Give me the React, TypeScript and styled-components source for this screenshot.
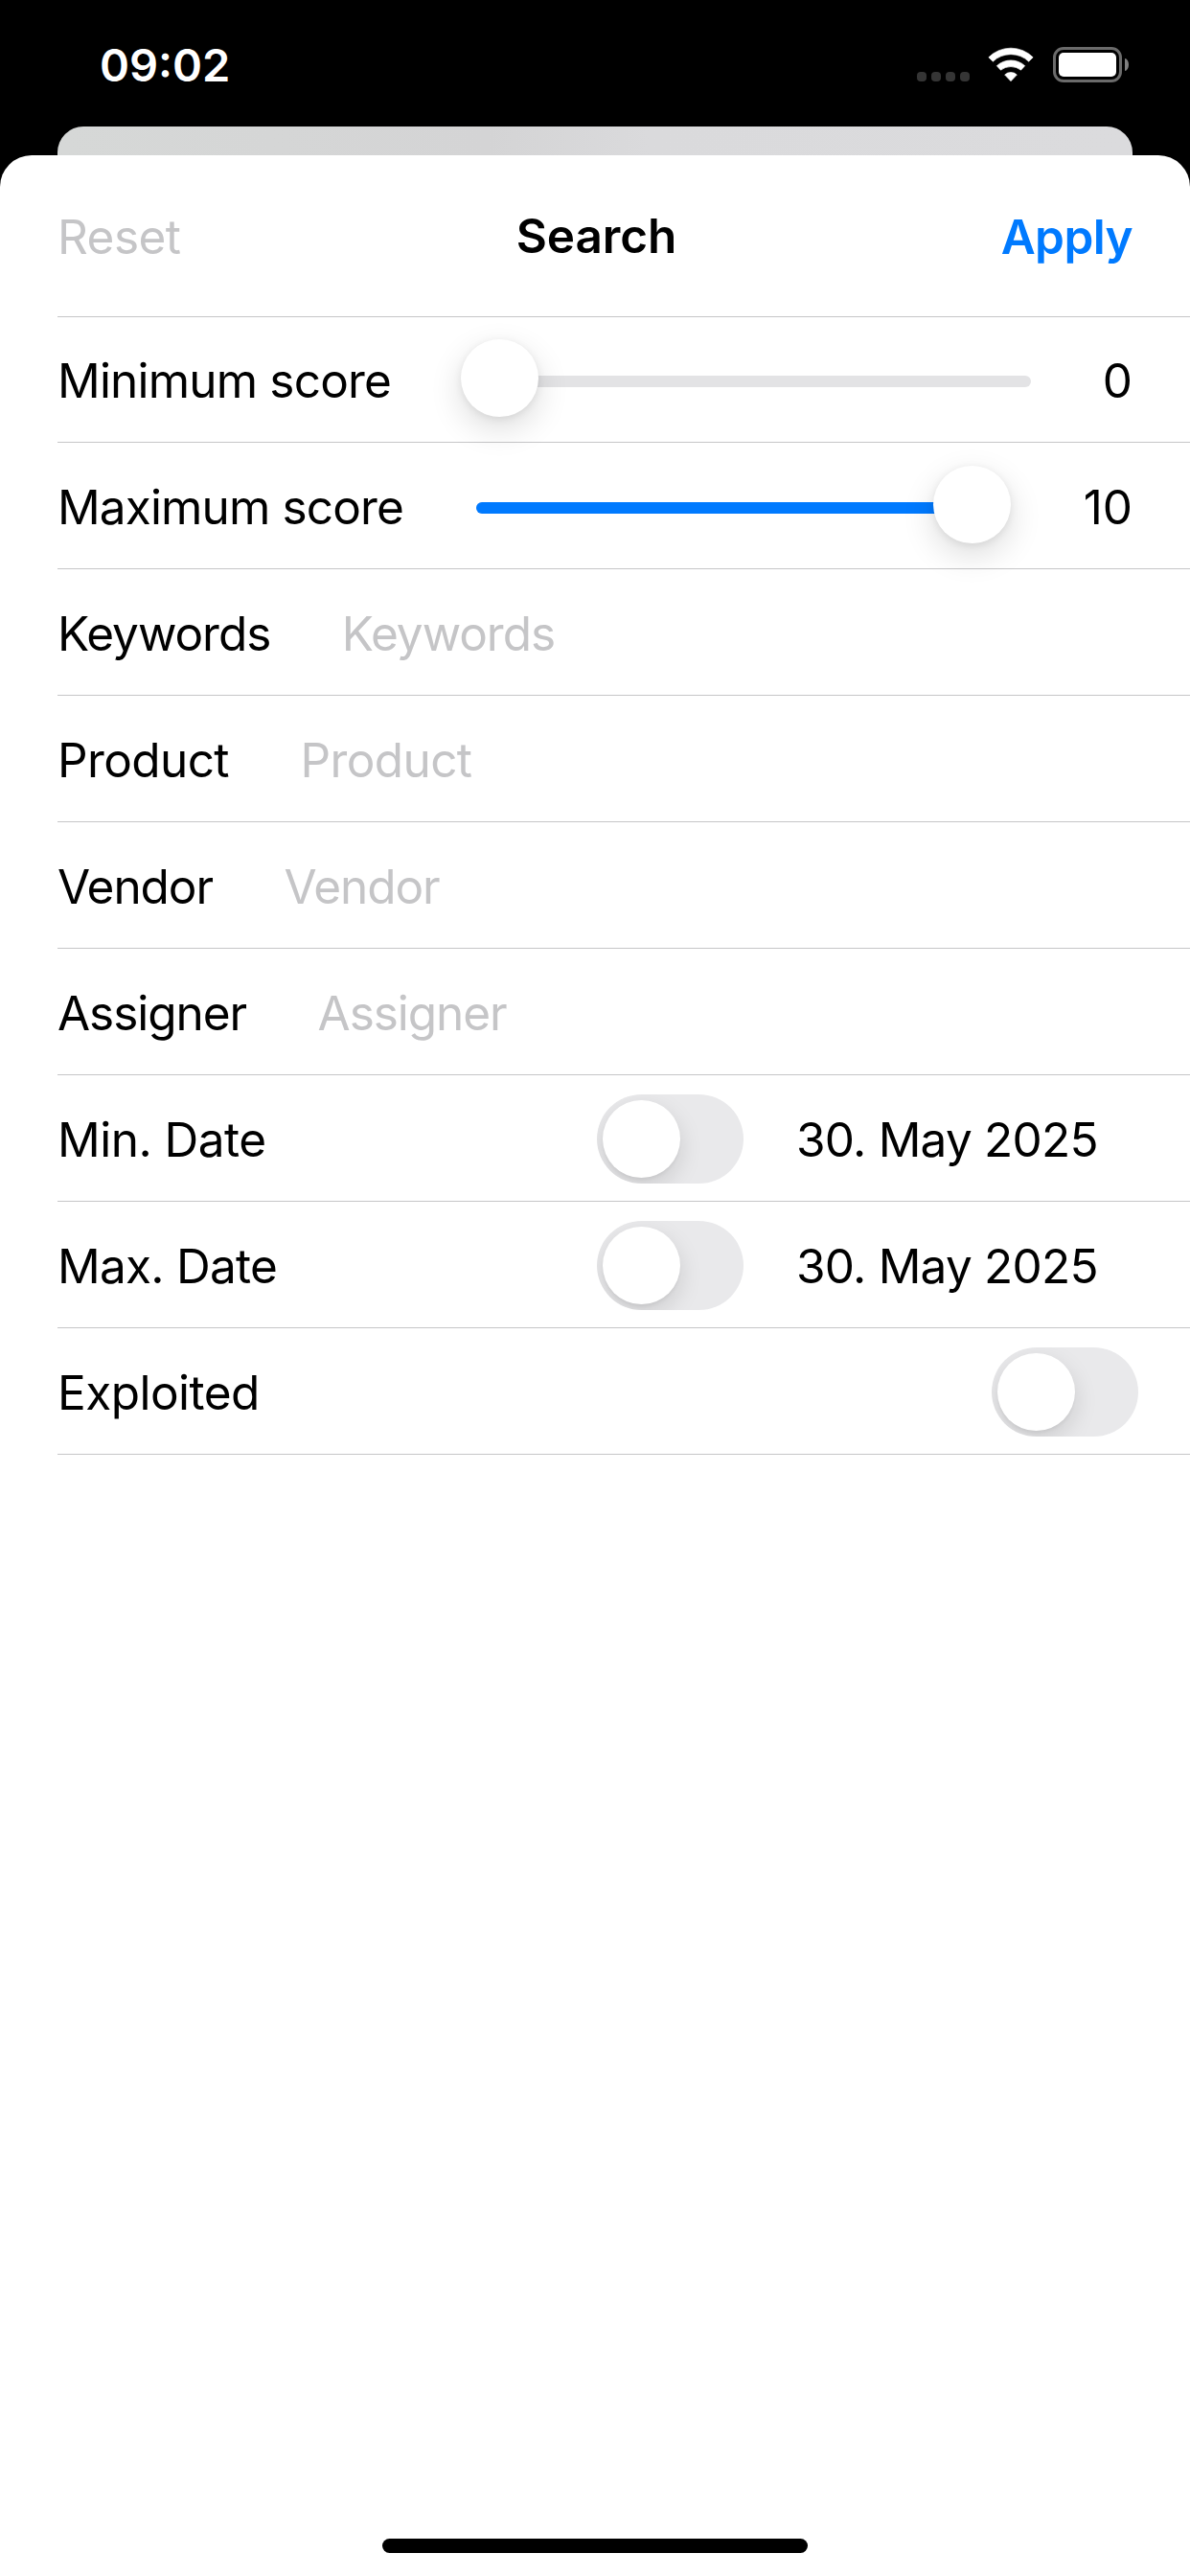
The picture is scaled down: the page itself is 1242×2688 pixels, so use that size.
import styled, { createGlobalStyle } from "styled-components";

const GlobalStyle = createGlobalStyle`
  * {
    box-sizing: border-box;
  }

  body {
    margin: 0;
    background: #000000;
    font-family: "Inter", "Liberation Sans", sans-serif;
  }
`;

const Screen = styled.div`
  display: flex;
  flex-direction: column;
  width: 1242px;
  height: 2688px;
  overflow: hidden;
  background: #000000;
`;

const StatusBar = styled.div`
  flex: none;
  display: flex;
  justify-content: space-between;
  height: 132px;
  padding: 0 64px 0 104px;
`;

const Time = styled.span`
  margin-top: 40px;
  font-size: 47px;
  line-height: 56px;
  font-weight: 570;
  color: #ffffff;
`;

const StatusIcons = styled.div`
  display: flex;
  align-items: flex-end;
  height: 86px;
`;

const SignalDots = styled.div`
  display: flex;
  gap: 5px;
  margin: 0 19px 1px 0;
`;

const SignalDot = styled.span`
  width: 10px;
  height: 10px;
  border-radius: 4px;
  background: #353535;
`;

const WifiIcon = styled.svg`
  width: 48px;
  height: 37px;
  margin-right: 20px;
`;

const Battery = styled.div`
  width: 72px;
  height: 37px;
  padding: 3px;
  border: 3px solid #6b6b6b;
  border-radius: 11px;
`;

const BatteryLevel = styled.div`
  height: 25px;
  border-radius: 5px;
  background: #ffffff;
`;

const BatteryCap = styled.div`
  width: 4px;
  height: 13px;
  margin: 0 0 12px 3px;
  border-radius: 0 4px 4px 0 / 0 6.5px 6.5px 0;
  background: #808080;
`;

const BackCard = styled.div`
  flex: none;
  height: 30px;
  margin: 0 60px;
  border-radius: 27px 27px 0 0;
  background: linear-gradient(90deg, #d6d8d7, #d4d4d5 40%, #dadadc 55%, #dbdbdd);
`;

const Sheet = styled.div`
  flex: 1;
  display: flex;
  flex-direction: column;
  border-radius: 33px 33px 0 0;
  background: #ffffff;
`;

const Header = styled.div`
  display: grid;
  grid-template-columns: 1fr auto 1fr;
  align-items: center;
  height: 168px;
  padding: 2px 60px 0;
`;

const ResetButton = styled.span`
  justify-self: start;
  font-size: 49.5px;
  letter-spacing: -0.54px;
  color: #c5c5c7;
`;

const Title = styled.span`
  padding: 0 0 2px 3px;
  font-size: 49.5px;
  font-weight: 570;
  letter-spacing: -0.1px;
`;

const ApplyButton = styled.span`
  justify-self: end;
  font-size: 49.5px;
  font-weight: 570;
  letter-spacing: -0.6px;
  color: #007aff;
`;

const Divider = styled.div`
  height: 1px;
  margin-left: 60px;
  background: #c6c6c8;
`;

const Form = styled.div`
  margin-left: 60px;
`;

const Row = styled.div`
  display: flex;
  align-items: center;
  height: 132px;
  padding-top: 1px;
  border-bottom: 1px solid #c6c6c8;
  font-size: 49.5px;
  color: #000000;

  &:first-child {
    height: 131px;
    padding-top: 0;
  }
`;

const Label = styled.span<{ $tracking: number; $width?: number }>`
  flex: none;
  width: ${({ $width }) => ($width ? `${$width}px` : "auto")};
  padding-top: 2px;
  letter-spacing: ${({ $tracking }) => $tracking}px;
  white-space: nowrap;
`;

const Placeholder = styled(Label)`
  margin-left: 74.5px;
  color: #c5c5c7;
`;

const SliderBox = styled.div<{ $width: number }>`
  position: relative;
  flex: none;
  display: flex;
  align-items: center;
  width: ${({ $width }) => $width}px;
  height: 81px;
  margin-top: 4px;
`;

const SliderTrack = styled.div`
  width: 100%;
  height: 12px;
  border-radius: 6px;
  background: #e3e3e5;
  overflow: hidden;
`;

const SliderFill = styled.div`
  height: 100%;
  background: #007aff;
`;

const SliderThumb = styled.div`
  position: absolute;
  top: -4px;
  width: 81px;
  height: 81px;
  border-radius: 50%;
  background: #ffffff;
  box-shadow: 0 12px 34px rgba(0, 0, 0, 0.14), 0 2px 8px rgba(0, 0, 0, 0.08);
`;

const ScoreValue = styled.span`
  flex: 1;
  padding: 2px 60px 0 0;
  text-align: right;
`;

const Toggle = styled.div`
  flex: none;
  width: 153px;
  height: 93px;
  margin-top: 1px;
  padding: 6px;
  border-radius: 47px;
  background: #e9e9eb;
  overflow: hidden;
`;

const ToggleKnob = styled.div`
  width: 81px;
  height: 81px;
  border-radius: 50%;
  background: #ffffff;
  box-shadow: 0 9px 24px rgba(0, 0, 0, 0.13), 0 3px 3px rgba(0, 0, 0, 0.04);
`;

const DateValue = styled.span`
  margin-left: 55px;
  padding-top: 2px;
  letter-spacing: -0.77px;
`;

const Spacer = styled.div`
  flex: 1;
`;

const EndInset = styled.div`
  flex: none;
  width: 54px;
`;

const HomeIndicator = styled.div`
  width: 444px;
  height: 15px;
  margin: auto auto 24px;
  border-radius: 8px;
  background: #000000;
`;

const CONTROL_OFFSET = 437;
const TOGGLE_OFFSET = 563;
const THUMB_SIZE = 81;
const THUMB_OVERHANG = 16;
const MAX_SCORE = 10;

interface RowProps {
  label: string;
  tracking: number;
}

interface ScoreRowProps extends RowProps {
  score: number;
  sliderWidth: number;
}

const ScoreRow = ({ label, tracking, score, sliderWidth }: ScoreRowProps) => {
  const travel = sliderWidth + THUMB_OVERHANG * 2 - THUMB_SIZE;
  const thumbLeft = (score / MAX_SCORE) * travel - THUMB_OVERHANG;

  return (
    <Row>
      <Label $tracking={tracking} $width={CONTROL_OFFSET}>{label}</Label>
      <SliderBox $width={sliderWidth}>
        <SliderTrack>
          <SliderFill style={{ width: thumbLeft + THUMB_SIZE / 2 }} />
        </SliderTrack>
        <SliderThumb style={{ left: thumbLeft }} />
      </SliderBox>
      <ScoreValue>{score}</ScoreValue>
    </Row>
  );
};

const TextRow = ({ label, tracking }: RowProps) => (
  <Row>
    <Label $tracking={tracking}>{label}</Label>
    <Placeholder $tracking={tracking}>{label}</Placeholder>
  </Row>
);

const Switch = () => (
  <Toggle>
    <ToggleKnob />
  </Toggle>
);

const DateRow = ({ label, tracking, date }: RowProps & { date: string }) => (
  <Row>
    <Label $tracking={tracking} $width={TOGGLE_OFFSET}>{label}</Label>
    <Switch />
    <DateValue>{date}</DateValue>
  </Row>
);

const Wifi = () => (
  <WifiIcon viewBox="0 0 144 111" fill="#fff" stroke="#fff" strokeWidth="2" strokeLinejoin="round">
    <path d="M2.5 32.5A98 98 0 0 1 141.5 32.5L128 45.5A81 81 0 0 0 16 45.5Z" />
    <path d="M28 59A65 65 0 0 1 116 59L103.500 72.500A51 51 0 0 0 40.500 72.500Z" />
    <path d="M53 87A28 28 0 0 1 91 87L72 107Z" />
  </WifiIcon>
);

const App = () => (
  <Screen>
    <GlobalStyle />
    <StatusBar>
      <Time>09:02</Time>
      <StatusIcons>
        <SignalDots>
          <SignalDot />
          <SignalDot />
          <SignalDot />
          <SignalDot />
        </SignalDots>
        <Wifi />
        <Battery>
          <BatteryLevel />
        </Battery>
        <BatteryCap />
      </StatusIcons>
    </StatusBar>
    <BackCard />
    <Sheet>
      <Header>
        <ResetButton>Reset</ResetButton>
        <Title>Search</Title>
        <ApplyButton>Apply</ApplyButton>
      </Header>
      <Divider />
      <Form>
        <ScoreRow label="Minimum score" tracking={-0.81} score={0} sliderWidth={579} />
        <ScoreRow label="Maximum score" tracking={-0.86} score={10} sliderWidth={542} />
        <TextRow label="Keywords" tracking={-1.04} />
        <TextRow label="Product" tracking={-0.6} />
        <TextRow label="Vendor" tracking={-1.05} />
        <TextRow label="Assigner" tracking={-1.05} />
        <DateRow label="Min. Date" tracking={-0.51} date="30. May 2025" />
        <DateRow label="Max. Date" tracking={-0.74} date="30. May 2025" />
        <Row>
          <Label $tracking={-0.54}>Exploited</Label>
          <Spacer />
          <Switch />
          <EndInset />
        </Row>
      </Form>
      <HomeIndicator />
    </Sheet>
  </Screen>
);

export default App;
